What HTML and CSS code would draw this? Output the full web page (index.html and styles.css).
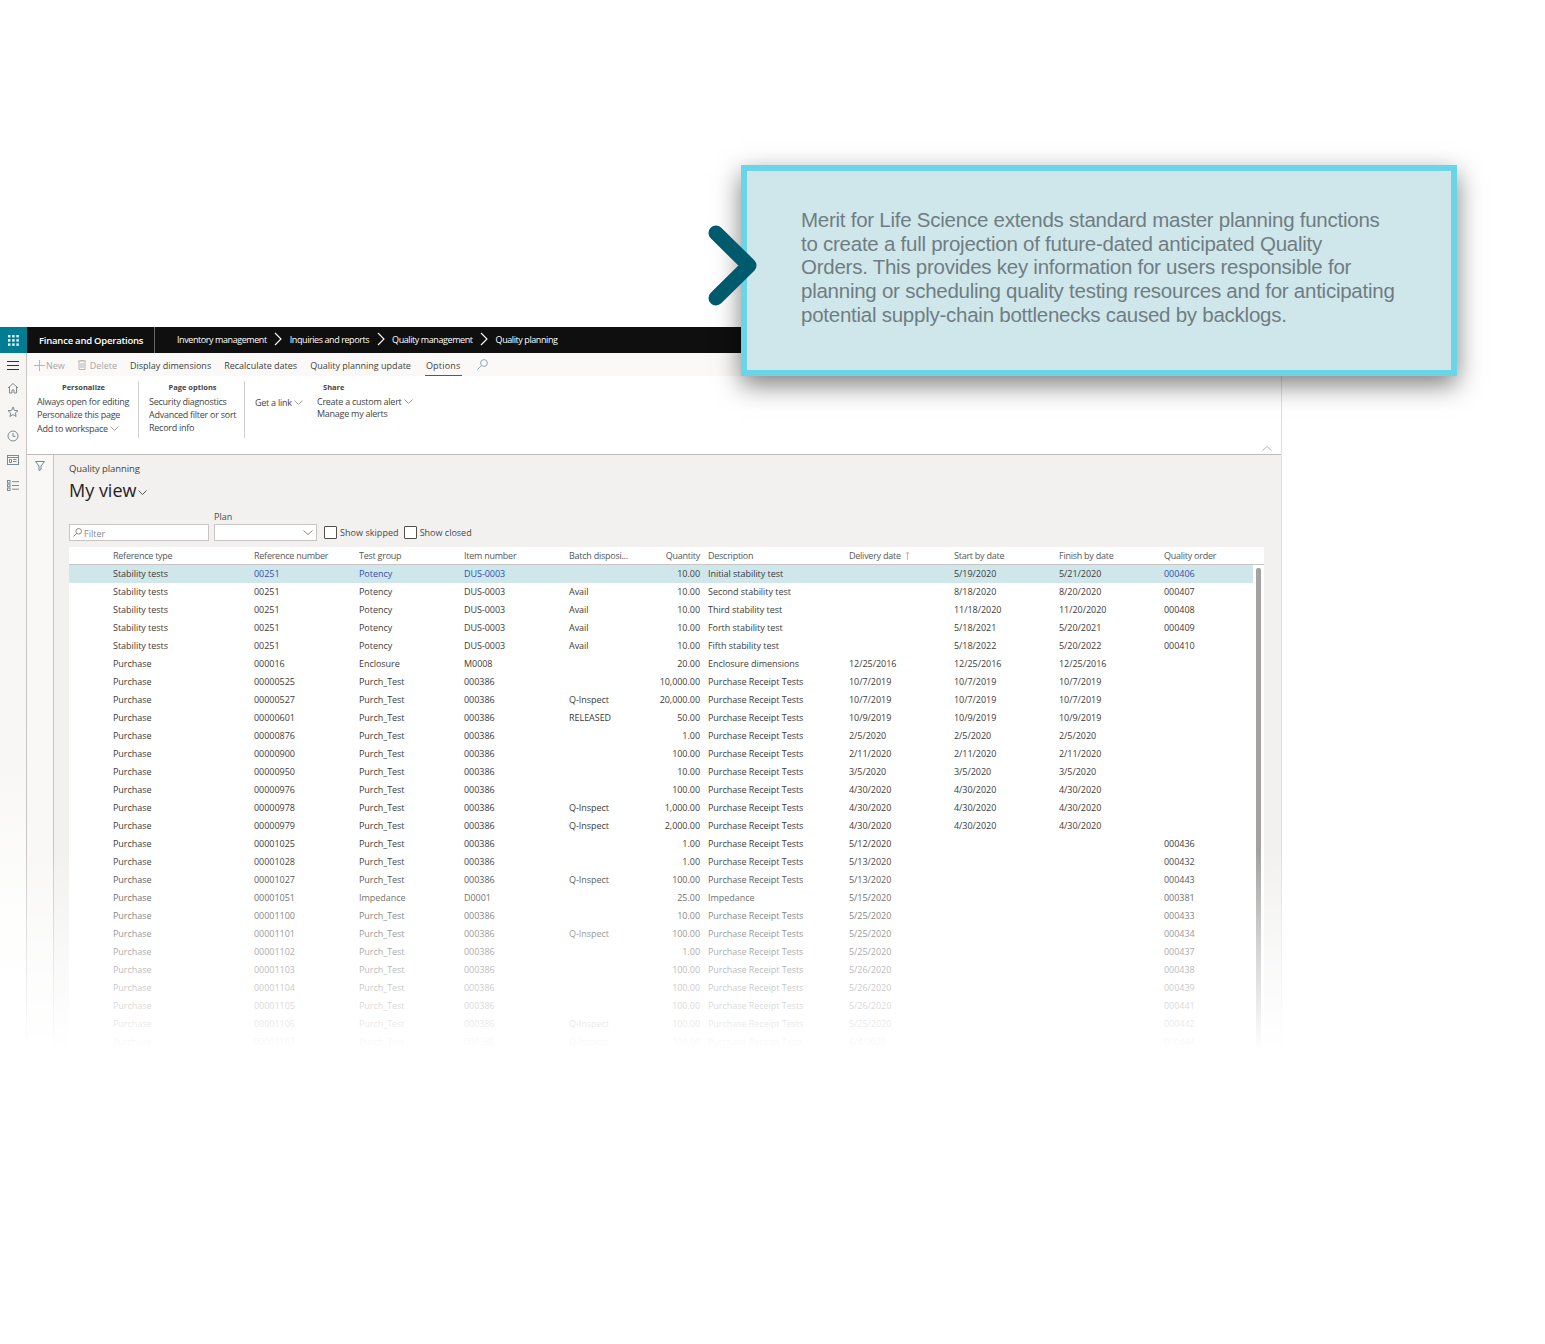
FILE: index.html
```html
<!DOCTYPE html>
<html lang="en">
<head>
<meta charset="utf-8">
<title>Quality planning</title>
<link rel="stylesheet" href="styles.css">
</head>
<body>
<div class="stage">
  <div class="app">
    <header class="topbar">
      <div class="waffle"><svg width="11" height="11" viewBox="0 0 11 11" fill="#fff"><rect x="0" y="0" width="2.4" height="2.4"/><rect x="4.2" y="0" width="2.4" height="2.4"/><rect x="8.4" y="0" width="2.4" height="2.4"/><rect x="0" y="4.2" width="2.4" height="2.4"/><rect x="4.2" y="4.2" width="2.4" height="2.4"/><rect x="8.4" y="4.2" width="2.4" height="2.4"/><rect x="0" y="8.4" width="2.4" height="2.4"/><rect x="4.2" y="8.4" width="2.4" height="2.4"/><rect x="8.4" y="8.4" width="2.4" height="2.4"/></svg></div>
      <div class="brand">Finance and Operations</div>
      <nav class="crumbs">
        <span>Inventory management</span>
        <svg class="crumb-sep" width="8" height="14" viewBox="0 0 8 14"><path d="M1 1l6 6-6 6" fill="none" stroke="#fff" stroke-width="1.100"/></svg>
        <span>Inquiries and reports</span>
        <svg class="crumb-sep" width="8" height="14" viewBox="0 0 8 14"><path d="M1 1l6 6-6 6" fill="none" stroke="#fff" stroke-width="1.100"/></svg>
        <span>Quality management</span>
        <svg class="crumb-sep" width="8" height="14" viewBox="0 0 8 14"><path d="M1 1l6 6-6 6" fill="none" stroke="#fff" stroke-width="1.100"/></svg>
        <span>Quality planning</span>
      </nav>
    </header>
    <div class="body">
      <aside class="rail">
        <svg width="12" height="9" viewBox="0 0 12 9"><path d="M0 .5h12M0 4.500h12M0 8.500h12" stroke="#333" stroke-width="1"/></svg>
        <svg width="12" height="12" viewBox="0 0 12 12" fill="none" stroke="#7d8a92"><path d="M1 6l5-4.500L11 6M2.500 5v6h2.500V8h2v3h2.500V5"/></svg>
        <svg width="12" height="12" viewBox="0 0 12 12" fill="none" stroke="#7d8a92"><path d="M6 1l1.400 3.400 3.600.300-2.700 2.300.8 3.500L6 8.600 2.900 10.500l.8-3.500L1 4.700l3.600-.300z"/></svg>
        <svg width="12" height="12" viewBox="0 0 12 12" fill="none" stroke="#7d8a92"><circle cx="6" cy="6" r="5"/><path d="M6 3v3.300h2.500"/></svg>
        <svg class="rail-cal" width="12" height="10" viewBox="0 0 12 10" fill="none" stroke="#7d8a92"><rect x=".5" y=".5" width="11" height="9"/><path d="M.5 2.500h11M2.500 4.500h2v3h-2zM6 4.500h3.500M6 6.500h3.500"/></svg>
        <svg class="rail-list" width="12" height="11" viewBox="0 0 12 11" fill="none" stroke="#7d8a92"><rect x=".5" y=".5" width="2.500" height="2.500"/><rect x=".5" y="4.200" width="2.500" height="2.500"/><rect x=".5" y="8" width="2.500" height="2.500"/><path d="M5 1.700h7M5 5.500h7M5 9.200h7"/></svg>
      </aside>
      <div class="content">
        <div class="actionbar">
          <span class="action muted action-new"><svg width="11" height="11" viewBox="0 0 11 11"><path d="M5.500 0v11M0 5.500h11" stroke="#b8b6b4" stroke-width="1"/></svg>New</span>
          <span class="action muted action-del"><svg width="8" height="10" viewBox="0 0 8 10" fill="none" stroke="#b8b6b4"><path d="M0 1h8M1 1v8.500h6V1M3 3v5M5 3v5M2.500 1V.5h3V1"/></svg>Delete</span>
          <span class="action">Display dimensions</span>
          <span class="action">Recalculate dates</span>
          <span class="action">Quality planning update</span>
          <span class="action active">Options</span>
          <svg class="action-search" width="11" height="11" viewBox="0 0 11 11" fill="none" stroke="#8aa9bd"><circle cx="7" cy="4" r="3.400"/><path d="M4.500 6.500L.5 10.500"/></svg>
        </div>
        <div class="ribbon">
          <section class="group group-personalize">
            <h3>Personalize</h3>
            <p>Always open for editing</p>
            <p>Personalize this page</p>
            <p class="last-line">Add to workspace <svg class="chev" width="9" height="5" viewBox="0 0 9 5"><path d="M.5.500l4 4 4-4" fill="none" stroke="#a19f9d"/></svg></p>
          </section>
          <section class="group group-page">
            <h3>Page options</h3>
            <p>Security diagnostics</p>
            <p>Advanced filter or sort</p>
            <p>Record info</p>
          </section>
          <section class="group group-link">
            <p>Get a link <svg class="chev" width="9" height="5" viewBox="0 0 9 5"><path d="M.5.500l4 4 4-4" fill="none" stroke="#a19f9d"/></svg></p>
          </section>
          <section class="group group-share">
            <h3>Share</h3>
            <p>Create a custom alert <svg class="chev" width="9" height="5" viewBox="0 0 9 5"><path d="M.5.500l4 4 4-4" fill="none" stroke="#a19f9d"/></svg></p>
            <p>Manage my alerts</p>
          </section>
          <svg class="collapse" width="10" height="5" viewBox="0 0 10 5"><path d="M.5 4.500L5 .5l4.500 4" fill="none" stroke="#b8b6b4"/></svg>
        </div>
        <div class="workspace">
          <div class="filterpane"><svg width="10" height="10" viewBox="0 0 10 10" fill="none" stroke="#6b8a96"><path d="M.5.500h9L6 5v3.500L4 9.500V5z"/></svg></div>
          <main class="page">
            <div class="page-caption">Quality planning</div>
            <h1 class="view">My view<svg width="9" height="5" viewBox="0 0 9 5"><path d="M.5.500l4 4 4-4" fill="none" stroke="#555"/></svg></h1>
            <div class="filters">
              <div class="filterbox"><svg width="9" height="9" viewBox="0 0 9 9" fill="none" stroke="#8a8886"><circle cx="5.700" cy="3.300" r="2.800"/><path d="M3.700 5.300L.5 8.500"/></svg><span class="filter-text">Filter</span></div>
              <div class="field">
                <label class="field-label">Plan</label>
                <div class="select"><svg width="10" height="5" viewBox="0 0 10 5"><path d="M.5.500L5 4.500l4.500-4" fill="none" stroke="#8a8886"/></svg></div>
              </div>
              <label class="check check-skipped"><span class="box"></span>Show skipped</label>
              <label class="check"><span class="box"></span>Show closed</label>
            </div>
            <div class="grid">
              <div class="row head"><span></span><span>Reference type</span><span>Reference number</span><span>Test group</span><span>Item number</span><span>Batch disposi...</span><span class="num">Quantity</span><span>Description</span><span>Delivery date <svg class="sort" width="5" height="9" viewBox="0 0 5 9"><path d="M2.500 9V1M.5 3l2-2 2 2" fill="none" stroke="#d8b98a"/></svg></span><span>Start by date</span><span>Finish by date</span><span>Quality order</span></div>
              <div class="scrollbar"></div>
              <div class="row selected"><span></span><span>Stability tests</span><span class="link">00251</span><span class="link">Potency</span><span class="link">DUS-0003</span><span></span><span class="num">10.00</span><span>Initial stability test</span><span></span><span>5/19/2020</span><span>5/21/2020</span><span class="link">000406</span></div>
              <div class="row"><span></span><span>Stability tests</span><span>00251</span><span>Potency</span><span>DUS-0003</span><span>Avail</span><span class="num">10.00</span><span>Second stability test</span><span></span><span>8/18/2020</span><span>8/20/2020</span><span>000407</span></div>
              <div class="row"><span></span><span>Stability tests</span><span>00251</span><span>Potency</span><span>DUS-0003</span><span>Avail</span><span class="num">10.00</span><span>Third stability test</span><span></span><span>11/18/2020</span><span>11/20/2020</span><span>000408</span></div>
              <div class="row"><span></span><span>Stability tests</span><span>00251</span><span>Potency</span><span>DUS-0003</span><span>Avail</span><span class="num">10.00</span><span>Forth stability test</span><span></span><span>5/18/2021</span><span>5/20/2021</span><span>000409</span></div>
              <div class="row"><span></span><span>Stability tests</span><span>00251</span><span>Potency</span><span>DUS-0003</span><span>Avail</span><span class="num">10.00</span><span>Fifth stability test</span><span></span><span>5/18/2022</span><span>5/20/2022</span><span>000410</span></div>
              <div class="row"><span></span><span>Purchase</span><span>000016</span><span>Enclosure</span><span>M0008</span><span></span><span class="num">20.00</span><span>Enclosure dimensions</span><span>12/25/2016</span><span>12/25/2016</span><span>12/25/2016</span><span></span></div>
              <div class="row"><span></span><span>Purchase</span><span>00000525</span><span>Purch_Test</span><span>000386</span><span></span><span class="num">10,000.00</span><span>Purchase Receipt Tests</span><span>10/7/2019</span><span>10/7/2019</span><span>10/7/2019</span><span></span></div>
              <div class="row"><span></span><span>Purchase</span><span>00000527</span><span>Purch_Test</span><span>000386</span><span>Q-Inspect</span><span class="num">20,000.00</span><span>Purchase Receipt Tests</span><span>10/7/2019</span><span>10/7/2019</span><span>10/7/2019</span><span></span></div>
              <div class="row"><span></span><span>Purchase</span><span>00000601</span><span>Purch_Test</span><span>000386</span><span>RELEASED</span><span class="num">50.00</span><span>Purchase Receipt Tests</span><span>10/9/2019</span><span>10/9/2019</span><span>10/9/2019</span><span></span></div>
              <div class="row"><span></span><span>Purchase</span><span>00000876</span><span>Purch_Test</span><span>000386</span><span></span><span class="num">1.00</span><span>Purchase Receipt Tests</span><span>2/5/2020</span><span>2/5/2020</span><span>2/5/2020</span><span></span></div>
              <div class="row"><span></span><span>Purchase</span><span>00000900</span><span>Purch_Test</span><span>000386</span><span></span><span class="num">100.00</span><span>Purchase Receipt Tests</span><span>2/11/2020</span><span>2/11/2020</span><span>2/11/2020</span><span></span></div>
              <div class="row"><span></span><span>Purchase</span><span>00000950</span><span>Purch_Test</span><span>000386</span><span></span><span class="num">10.00</span><span>Purchase Receipt Tests</span><span>3/5/2020</span><span>3/5/2020</span><span>3/5/2020</span><span></span></div>
              <div class="row"><span></span><span>Purchase</span><span>00000976</span><span>Purch_Test</span><span>000386</span><span></span><span class="num">100.00</span><span>Purchase Receipt Tests</span><span>4/30/2020</span><span>4/30/2020</span><span>4/30/2020</span><span></span></div>
              <div class="row"><span></span><span>Purchase</span><span>00000978</span><span>Purch_Test</span><span>000386</span><span>Q-Inspect</span><span class="num">1,000.00</span><span>Purchase Receipt Tests</span><span>4/30/2020</span><span>4/30/2020</span><span>4/30/2020</span><span></span></div>
              <div class="row"><span></span><span>Purchase</span><span>00000979</span><span>Purch_Test</span><span>000386</span><span>Q-Inspect</span><span class="num">2,000.00</span><span>Purchase Receipt Tests</span><span>4/30/2020</span><span>4/30/2020</span><span>4/30/2020</span><span></span></div>
              <div class="row"><span></span><span>Purchase</span><span>00001025</span><span>Purch_Test</span><span>000386</span><span></span><span class="num">1.00</span><span>Purchase Receipt Tests</span><span>5/12/2020</span><span></span><span></span><span>000436</span></div>
              <div class="row"><span></span><span>Purchase</span><span>00001028</span><span>Purch_Test</span><span>000386</span><span></span><span class="num">1.00</span><span>Purchase Receipt Tests</span><span>5/13/2020</span><span></span><span></span><span>000432</span></div>
              <div class="row"><span></span><span>Purchase</span><span>00001027</span><span>Purch_Test</span><span>000386</span><span>Q-Inspect</span><span class="num">100.00</span><span>Purchase Receipt Tests</span><span>5/13/2020</span><span></span><span></span><span>000443</span></div>
              <div class="row"><span></span><span>Purchase</span><span>00001051</span><span>Impedance</span><span>D0001</span><span></span><span class="num">25.00</span><span>Impedance</span><span>5/15/2020</span><span></span><span></span><span>000381</span></div>
              <div class="row"><span></span><span>Purchase</span><span>00001100</span><span>Purch_Test</span><span>000386</span><span></span><span class="num">10.00</span><span>Purchase Receipt Tests</span><span>5/25/2020</span><span></span><span></span><span>000433</span></div>
              <div class="row"><span></span><span>Purchase</span><span>00001101</span><span>Purch_Test</span><span>000386</span><span>Q-Inspect</span><span class="num">100.00</span><span>Purchase Receipt Tests</span><span>5/25/2020</span><span></span><span></span><span>000434</span></div>
              <div class="row"><span></span><span>Purchase</span><span>00001102</span><span>Purch_Test</span><span>000386</span><span></span><span class="num">1.00</span><span>Purchase Receipt Tests</span><span>5/25/2020</span><span></span><span></span><span>000437</span></div>
              <div class="row"><span></span><span>Purchase</span><span>00001103</span><span>Purch_Test</span><span>000386</span><span></span><span class="num">100.00</span><span>Purchase Receipt Tests</span><span>5/26/2020</span><span></span><span></span><span>000438</span></div>
              <div class="row"><span></span><span>Purchase</span><span>00001104</span><span>Purch_Test</span><span>000386</span><span></span><span class="num">100.00</span><span>Purchase Receipt Tests</span><span>5/26/2020</span><span></span><span></span><span>000439</span></div>
              <div class="row"><span></span><span>Purchase</span><span>00001105</span><span>Purch_Test</span><span>000386</span><span></span><span class="num">100.00</span><span>Purchase Receipt Tests</span><span>5/26/2020</span><span></span><span></span><span>000441</span></div>
              <div class="row"><span></span><span>Purchase</span><span>00001106</span><span>Purch_Test</span><span>000386</span><span>Q-Inspect</span><span class="num">100.00</span><span>Purchase Receipt Tests</span><span>5/25/2020</span><span></span><span></span><span>000442</span></div>
              <div class="row"><span></span><span>Purchase</span><span>00001107</span><span>Purch_Test</span><span>000386</span><span>Q-Inspect</span><span class="num">100.00</span><span>Purchase Receipt Tests</span><span>6/4/2020</span><span></span><span></span><span>000444</span></div>
            </div>
          </main>
        </div>
      </div>
    </div>
    <div class="fade"></div>
  </div>
  <div class="callout">
    <p>Merit for Life Science extends standard master planning functions<br>to create a full projection of future-dated anticipated Quality<br>Orders. This provides key information for users responsible for<br>planning or scheduling quality testing resources and for anticipating<br>potential supply-chain bottlenecks caused by backlogs.</p>
  </div>
  <svg class="arrow" width="50" height="82" viewBox="0 0 50 82"><path d="M8 8l33 32.500L8 73" fill="none" stroke="#005a6e" stroke-width="15" stroke-linecap="round" stroke-linejoin="round"/></svg>
</div>
</body>
</html>
```
FILE: styles.css
```css
* { box-sizing: border-box; }
html, body { margin: 0; padding: 0; background: #fff; }
body { font-family: "Open Sans", "Noto Sans", sans-serif; font-size: 9px; color: #323130; }
h1, h3, p { margin: 0; font-weight: normal; }

.stage { position: relative; height: 1344px; padding-top: 327px; overflow: hidden; }
.app { position: relative; width: 1282px; height: 723px; display: flex; flex-direction: column; overflow: hidden; }

.topbar { height: 26px; background: #0f0f0f; color: #fff; display: flex; align-items: center; flex: none; }
.waffle { width: 27px; height: 26px; background: #007d93; display: flex; align-items: center; justify-content: center; flex: none; }
.brand { width: 128px; height: 26px; padding: 1px 0 0 12px; line-height: 25px; font-size: 9.500px; font-weight: 600; letter-spacing: -.23px; border-right: 1px solid #666; white-space: nowrap; }
.crumbs { display: flex; align-items: center; gap: 7.500px; margin: -2px 0 0 22px; font-size: 9px; letter-spacing: -.42px; white-space: nowrap; }

.body { flex: 1; display: flex; min-height: 0; }
.rail { width: 27px; flex: none; background: linear-gradient(to bottom, #f6f5f4 0, #f8f7f6 58%, #fcfcfb 75%, #fff 100%); border-right: 1px solid #c8c6c4; display: flex; flex-direction: column; align-items: center; padding-top: 8px; gap: 12px; }
.rail-cal { margin-top: 1px; }
.rail-list { margin-top: 3px; }

.content { flex: 1; min-width: 0; display: flex; flex-direction: column; border-right: 1px solid #e1dfdd; }
.actionbar { height: 23px; background: #faf9f8; display: flex; align-items: center; padding: 1px 0 0 7px; flex: none; color: #3f3e3d; }
.action { display: inline-flex; align-items: center; height: 22px; margin-right: 13px; white-space: nowrap; }
.action.muted { color: #a8a6a4; }
.action svg { margin-right: 1px; }
.action-del svg { margin-right: 4px; }
.active { border-bottom: 1px solid #007d93; padding: 1px 1px 0; margin-left: 1px; letter-spacing: .2px; }
.action-search { margin-left: 2px; margin-top: -2px; }

.ribbon { height: 79px; background: #fff; border-bottom: 1px solid #bdbbb9; display: flex; position: relative; padding-top: 5px; flex: none; }
.group { height: 57px; padding: 0 8px 0 10px; line-height: 13px; white-space: nowrap; color: #454443; letter-spacing: -.26px; }
.group h3 { font-size: 7.500px; font-weight: 700; text-align: center; line-height: 12px; margin-bottom: 2px; letter-spacing: 0; }
.last-line { margin-top: 1px; }
.chev { vertical-align: 1px; }
.group-personalize { width: 112px; border-right: 1px solid #d2d0ce; }
.group-page { width: 106px; border-right: 1px solid #d2d0ce; }
.group-link { width: 62px; padding-top: 15px; }
.group-share { width: 130px; padding-left: 10px; line-height: 12px; }
.group-share h3 { text-align: left; padding-left: 6px; margin-bottom: 3px; }
.collapse { position: absolute; right: 9px; bottom: 3px; }

.workspace { flex: 1; display: flex; min-height: 0; background: #f2f1f0; }
.filterpane { width: 27px; flex: none; background: #f9f8f7; border-right: 1px solid #c8c6c4; padding: 6px 0 0 8px; }
.page { flex: 1; min-width: 0; padding: 8px 17px 0 15px; }
.page-caption { height: 12px; line-height: 12px; color: #444; font-size: 9.500px; letter-spacing: -.1px; }
.view { font-size: 18px; line-height: 24px; margin-top: 3px; color: #242322; display: flex; align-items: center; gap: 2px; height: 24px; }
.view svg { margin-top: 5px; }
.filters { display: flex; align-items: flex-end; margin-top: 16px; height: 23px; }
.filterbox { width: 140px; height: 17px; background: #fff; border: 1px solid #c8c6c4; color: #8a8886; display: flex; align-items: center; gap: 2px; padding-left: 3px; }
.filter-text { padding-top: 2px; }
.field { margin-left: 5px; width: 103px; position: relative; }
.field-label { position: absolute; left: 0; top: -13px; color: #4a4948; line-height: 12px; }
.select { height: 17px; background: #fff; border: 1px solid #c8c6c4; display: flex; align-items: center; justify-content: flex-end; padding-right: 3px; }
.check { display: inline-flex; align-items: center; gap: 3px; height: 17px; white-space: nowrap; color: #4a4948; }
.check-skipped { margin: 0 5px 0 7px; letter-spacing: .05px; }
.box { width: 13px; height: 13px; border: 1px solid #4f4e4d; border-radius: 1px; background: #fff; }

.grid { position: relative; margin-top: 6px; background: #fff; width: 1195px; height: 520px; }
.row { display: grid; grid-template-columns: 44px 141px 105px 105px 105px 70px 69px 141px 105px 105px 105px 1fr; height: 18px; line-height: 18px; width: 1184px; color: #3c3b3a; white-space: nowrap; letter-spacing: -.04px; }
.row.head { height: 18px; color: #55585c; width: 1195px; border-bottom: 1px solid #c8c6c4; letter-spacing: -.25px; }
.row.selected { background: #cfe7eb; }
.sort { margin-left: 2px; vertical-align: -1px; }
.num { text-align: right; padding-right: 8px; }
.link { color: #2c50b4; }
.scrollbar { position: absolute; right: 3px; top: 21px; width: 5px; bottom: 0; border-radius: 2px; background: #a3a2a1; }

.fade { position: absolute; left: 0; right: 0; top: 523px; bottom: 0; background: linear-gradient(to bottom, rgba(255,255,255,0) 0, rgba(255,255,255,.5) 45%, rgba(255,255,255,1) 100%); }

.callout { position: absolute; left: 741px; top: 165px; width: 716px; height: 211px; background: #cfe7eb; border: 6px solid #6bd5e8; box-shadow: 0 9px 24px rgba(0,0,0,.5); padding: 37px 0 0 54px; }
.callout p { font-family: "Liberation Sans", Arial, sans-serif; font-size: 20.500px; letter-spacing: -.25px; line-height: 23.700px; color: #6f7d82; white-space: nowrap; }
.arrow { position: absolute; left: 708px; top: 225px; }
```
